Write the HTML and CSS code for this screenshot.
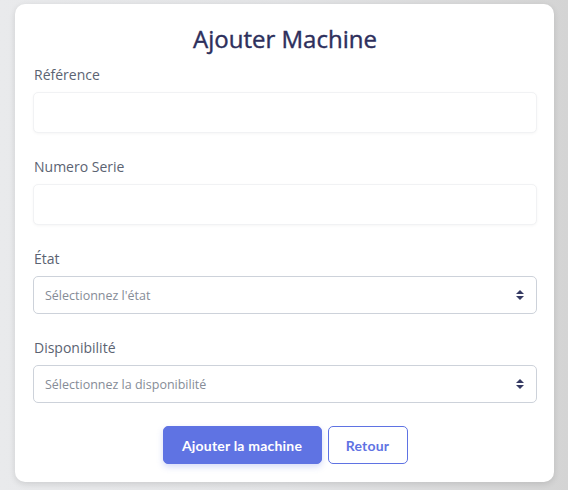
FILE: index.html
```html
<!DOCTYPE html>
<html lang="fr">
<head>
<meta charset="utf-8">
<title>Ajouter Machine</title>
<link rel="stylesheet" href="styles.css">
</head>
<body>
<div class="card">
  <h1 class="title">Ajouter Machine</h1>
  <form class="form">
    <div class="field">
      <label class="label">Référence</label>
      <div class="input"></div>
    </div>
    <div class="field">
      <label class="label">Numero Serie</label>
      <div class="input"></div>
    </div>
    <div class="field">
      <label class="label">État</label>
      <div class="select">
        <span class="placeholder">Sélectionnez l'état</span>
        <svg class="arrow" width="8" height="10" viewBox="0 0 4 5"><path d="M2 0L0 2h4zm0 5L0 3h4z" fill="#363a63"/></svg>
      </div>
    </div>
    <div class="field">
      <label class="label">Disponibilité</label>
      <div class="select">
        <span class="placeholder">Sélectionnez la disponibilité</span>
        <svg class="arrow" width="8" height="10" viewBox="0 0 4 5"><path d="M2 0L0 2h4zm0 5L0 3h4z" fill="#363a63"/></svg>
      </div>
    </div>
    <div class="actions">
      <button type="button" class="btn btn-primary">Ajouter la machine</button>
      <button type="button" class="btn btn-outline">Retour</button>
    </div>
  </form>
</div>
</body>
</html>
```
FILE: styles.css
```css
html, body {
  margin: 0;
  height: 100%;
}
body {
  background: linear-gradient(to right, #e9eaec 0%, #e3e4e6 50%, #d4d4d4 100%);
  padding: 4px 14px 0 15px;
  box-sizing: border-box;
  font-family: "Open Sans", "Liberation Sans", sans-serif;
}
.card {
  width: 539px;
  box-sizing: border-box;
  background: #fff;
  border-radius: 10px;
  box-shadow: 0 2px 6px rgba(0, 0, 0, 0.12);
  padding: 20px 17px 18px 18px;
}
.title {
  margin: 0;
  text-align: center;
  font-size: 24px;
  font-weight: 400;
  -webkit-text-stroke: 0.4px #2d2f5c;
  line-height: 29px;
  color: #2d2f5c;
}
.form {
  display: flex;
  flex-direction: column;
  margin-top: 11px;
}
.field {
  display: flex;
  flex-direction: column;
  gap: 7px;
  margin-bottom: 23px;
}
.label {
  font-size: 14px;
  line-height: 21px;
  color: #5b6372;
  padding-left: 1px;
}
.input {
  height: 41px;
  box-sizing: border-box;
  border: 1px solid #f1f2f4;
  border-radius: 5px;
  box-shadow: 0 1px 3px rgba(0, 0, 0, 0.04);
  background: #fff;
}
.select {
  height: 38px;
  box-sizing: border-box;
  border: 1px solid #cdd2da;
  border-radius: 5px;
  display: flex;
  align-items: center;
  justify-content: space-between;
  padding: 0 12px 0 11px;
  background: #fff;
}
.placeholder {
  font-size: 12.5px;
  color: #868c97;
}
.arrow {
  display: block;
}
.actions {
  display: flex;
  justify-content: center;
  gap: 6px;
  margin-top: 0;
}
.btn {
  height: 38px;
  box-sizing: border-box;
  border-radius: 5px;
  font-family: Lato, "Open Sans", sans-serif;
  font-weight: 700;
  font-size: 14px;
  letter-spacing: 0.2px;
  cursor: pointer;
}
.btn-primary {
  width: 159px;
  background: #5f73e3;
  border: 1px solid #5f73e3;
  color: #fff;
  box-shadow: 0 3px 6px rgba(95, 115, 227, 0.25);
}
.btn-outline {
  width: 80px;
  background: #fff;
  border: 1px solid #5f73e3;
  color: #5f73e3;
}
```
